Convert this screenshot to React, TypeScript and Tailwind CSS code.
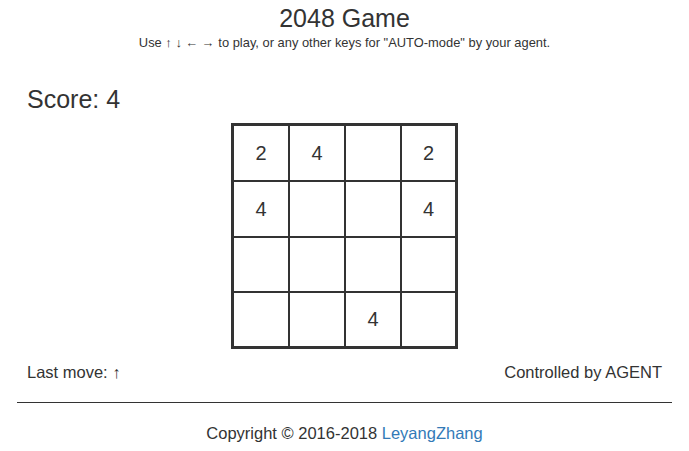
import React from "react";

const cells: (number | null)[] = [
  2, 4, null, 2,
  4, null, null, 4,
  null, null, null, null,
  null, null, 4, null,
];

export default function App() {
  return (
    <div
      className="w-[689px] h-[451px] bg-white text-[#333] overflow-hidden"
      style={{ fontFamily: '"Liberation Sans", Arial, sans-serif' }}
    >
      <h1 className="text-center text-[25px] leading-none mt-[6px]">2048 Game</h1>
      <p className="text-center text-[12.9px] leading-none mt-[6px]">
        Use ↑ ↓ ← → to play, or any other keys for "AUTO-mode" by your agent.
      </p>
      <div className="text-[25px] leading-none mt-[37px] pl-[27px]">Score: 4</div>
      <div className="flex justify-center mt-[11px]">
        <div className="border-[3px] border-[#333] bg-[#333] grid grid-cols-[54px_54px_54px_53px] grid-rows-[54px_54px_53px_53px] gap-[2px]">
          {cells.map((v, i) => (
            <div key={i} className="bg-white flex items-center justify-center text-[20px] leading-none">
              {v ?? ""}
            </div>
          ))}
        </div>
      </div>
      <div className="flex justify-between text-[16.5px] leading-none mt-[15px] px-[27px]">
        <span>Last move: ↑</span>
        <span>Controlled by AGENT</span>
      </div>
      <hr className="mx-[17px] mt-[22px] border-0 border-t border-[#333]" />
      <p className="text-center text-[16.5px] leading-none mt-[22px]">
        Copyright © 2016-2018 <a className="text-[#337ab7]" href="#">LeyangZhang</a>
      </p>
    </div>
  );
}
